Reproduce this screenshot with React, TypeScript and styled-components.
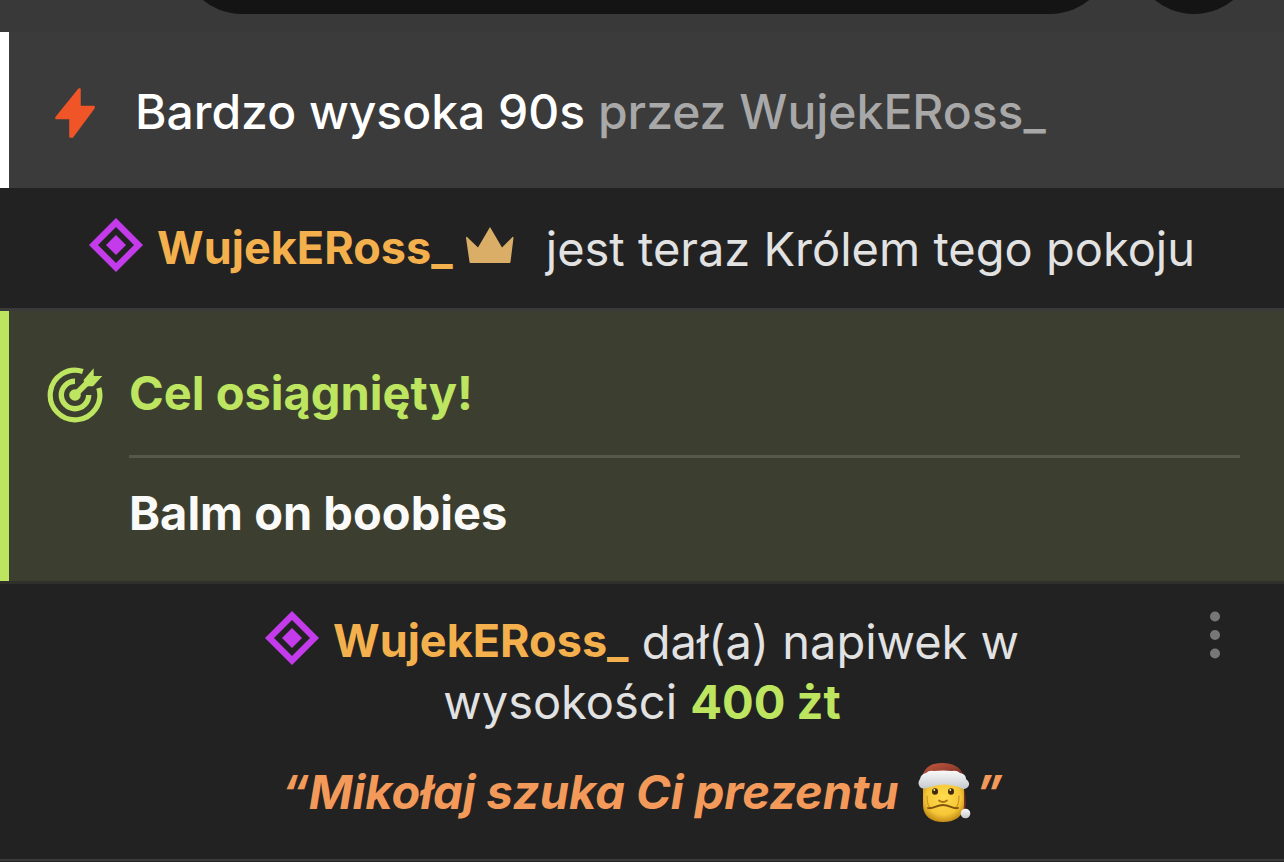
import React from "react";
import styled, { createGlobalStyle } from "styled-components";

const GlobalStyle = createGlobalStyle`
  *, *::before, *::after { box-sizing: border-box; }
  body {
    margin: 0;
    background: #222222;
    color: #e2e2e2;
    font-family: Inter, "Noto Sans", sans-serif;
    font-size: 47px;
    line-height: 60px;
  }
  p, h2 { margin: 0; font-size: inherit; }
`;

const Chat = styled.main`
  display: flex;
  flex-direction: column;
`;

const TopBar = styled.header`
  display: flex;
  align-items: flex-end;
  gap: 20px;
  height: 32px;
  padding: 0 28px 18px 180px;
  background: #393939;
  overflow: hidden;
`;

const Pill = styled.div<{ $round?: boolean }>`
  flex: ${(p) => (p.$round ? "0 0 124px" : "1 1 0")};
  height: 124px;
  border-radius: 62px;
  background: #141414;
`;

const Notice = styled.section<{ $accent: string; $fill: string }>`
  border-left: 9px solid ${(p) => p.$accent};
  background: ${(p) => p.$fill};
`;

const DeviceNotice = styled(Notice)`
  display: flex;
  align-items: center;
  gap: 40px;
  padding: 50px 44px 46px;
  color: #ffffff;
  font-size: 48px;
  font-weight: 500;
`;

const Muted = styled.span`
  color: #a8a8a8;
`;

const Message = styled.article`
  position: relative;
  padding: 30px 40px 29px;
  border-bottom: 3px solid #3a3a3a;
  text-align: center;
`;

const TipMessage = styled(Message)`
  padding: 27px 220px 37px;
  border-top: 3px solid #2f302b;
  border-bottom-width: 2px;
`;

const User = styled.a`
  color: #f3b04d;
  font-size: 45px;
  font-weight: 700;
  line-height: 48px;
  text-decoration: none;
  vertical-align: 2px;

  svg {
    margin-right: 14px;
    vertical-align: -8px;
  }
`;

const CrownSlot = styled.span`
  margin: 0 18px 0 12px;

  svg {
    vertical-align: 2px;
  }
`;

const GoalNotice = styled(Notice)`
  display: grid;
  grid-template-columns: 56px 1fr;
  column-gap: 26px;
  align-items: center;
  padding: 52px 44px 38px 38px;
  font-weight: 700;
`;

const GoalTitle = styled.h2`
  color: #bee560;
  font-weight: 700;
`;

const GoalText = styled.p`
  grid-column: 2;
  margin-top: 32px;
  padding-top: 25px;
  border-top: 3px solid #55584b;
  color: #fafaf8;
`;

const Amount = styled.strong`
  color: #bee560;
  font-weight: 700;
`;

const Quote = styled.p`
  display: flex;
  align-items: center;
  justify-content: center;
  margin-top: 30px;
  color: #f39a5a;
  font-style: italic;
  font-weight: 700;
`;

const MenuButton = styled.button`
  position: absolute;
  top: 24px;
  right: 56px;
  display: flex;
  padding: 0;
  border: 0;
  background: none;
  cursor: pointer;
`;

const Bolt = () => (
  <svg width="42" height="52" viewBox="-1 -2 42 52" aria-hidden="true">
    <path d="M25 1 2 29.500v1h14V49h2.500L40 20v-1.500H26V1z" fill="#f05527" stroke="#f05527" strokeWidth="1.500" strokeLinejoin="round" />
  </svg>
);

const Diamond = () => (
  <svg width="54" height="54" viewBox="0 0 54 54" aria-hidden="true">
    <path d="M27 0 54 27 27 54 0 27zM27 9 9 27l18 18 18-18z" fill="#c33bea" fillRule="evenodd" />
    <path d="m27 17 10 10-10 10-10-10z" fill="#c33bea" />
  </svg>
);

const Crown = () => (
  <svg width="50" height="38" viewBox="0 0 50 38" aria-hidden="true">
    <path d="M25 1 37 21.500 47.500 11q1-.5 1 .8L45.500 36q-.1 1-1 1h-39q-.9 0-1-1L1 11.800q0-1.300 1-.8l11 10.500z" fill="#dbae68" />
  </svg>
);

const Target = () => (
  <svg width="56" height="60" viewBox="0 -4 56 60" aria-hidden="true">
    <g fill="none" stroke="#bee560">
      <path d="M35.800 4.500A24.800 24.800 0 1 0 51.800 21" strokeWidth="5.200" />
      <path d="M28 14.300A13.700 13.700 0 1 0 41.700 28" strokeWidth="5.400" />
      <path d="m28 28 13-13" strokeWidth="6" />
    </g>
    <circle cx="28" cy="28" r="5.800" fill="#bee560" />
    <path d="M36.500 13 46.700 1.300V9h8.600L46 19.300h-7.300z" fill="#bee560" />
  </svg>
);

const Dots = () => (
  <svg width="26" height="54" viewBox="0 0 26 54" fill="#777777" aria-hidden="true">
    <circle cx="13" cy="8.500" r="5" />
    <circle cx="13" cy="27" r="5" />
    <circle cx="13" cy="45.500" r="5" />
  </svg>
);

const Santa = () => (
  <svg width="77" height="60" viewBox="-2 0 77 60" role="img" aria-label="Mikołaj">
    <defs>
      <radialGradient id="face" cx="50%" cy="40%" r="65%">
        <stop offset="0" stopColor="#ffdc4e" />
        <stop offset=".65" stopColor="#f6c636" />
        <stop offset="1" stopColor="#b77d10" />
      </radialGradient>
      <linearGradient id="hat" x1="0" y1="0" x2="1" y2="1">
        <stop offset="0" stopColor="#c95a42" />
        <stop offset="1" stopColor="#6f2b20" />
      </linearGradient>
      <linearGradient id="fur" x1="0" y1="0" x2="0" y2="1">
        <stop offset="0" stopColor="#fafafa" />
        <stop offset="1" stopColor="#c5c9cc" />
      </linearGradient>
    </defs>
    <path d="M59 18q8 12 5 32l-5-2z" fill="#792f20" />
    <path d="M22 19v24c0 11 8 17 20 17s21-6 21-17V19z" fill="url(#face)" />
    <path d="M26 34c0 7 1 11 4 12M58 34c0 7-1 11-4 12" fill="none" stroke="#c99422" strokeWidth="1.200" strokeLinecap="round" />
    <path d="M27 46c5 1.500 8-3 15-3s10 4.500 15 3" fill="none" stroke="#80540e" strokeWidth="1.800" strokeLinecap="round" />
    <path d="M38 38.500q4 3 8 0" fill="none" stroke="#a87112" strokeWidth="1.800" strokeLinecap="round" />
    <ellipse cx="34" cy="29.500" rx="3" ry="3.200" fill="#3d2a0b" />
    <ellipse cx="50" cy="29.500" rx="3" ry="3.200" fill="#3d2a0b" />
    <circle cx="33.300" cy="28" r=".9" fill="#fff1b5" />
    <circle cx="49.300" cy="28" r=".9" fill="#fff1b5" />
    <path d="M21 15C24 4 31 1 41 1s19 3 22 14l-21-4z" fill="url(#hat)" />
    <path d="M19 25q-3-4 0-8 1-5 6-6 3-3 8-2 9-1 18 0 5-1 8 2 6 1 6 6 5 4 2 8-4 4-9 0-15-5-29 0-7 3-10 0z" fill="url(#fur)" />
    <circle cx="64.500" cy="51.500" r="4.800" fill="url(#fur)" />
  </svg>
);

const UserName = () => (
  <User href="#WujekERoss_">
    <Diamond />
    WujekERoss_
  </User>
);

export default function App() {
  return (
    <>
      <GlobalStyle />
      <Chat>
        <TopBar>
          <Pill />
          <Pill $round />
        </TopBar>
        <DeviceNotice $accent="#ffffff" $fill="#3b3b3b">
          <Bolt />
          <p>
            Bardzo wysoka 90s <Muted>przez WujekERoss_</Muted>
          </p>
        </DeviceNotice>
        <Message>
          <UserName />
          <CrownSlot>
            <Crown />
          </CrownSlot>{" "}
          jest teraz Królem tego pokoju
        </Message>
        <GoalNotice $accent="#bee560" $fill="#3c3f30">
          <Target />
          <GoalTitle>Cel osiągnięty!</GoalTitle>
          <GoalText>Balm on boobies</GoalText>
        </GoalNotice>
        <TipMessage>
          <p>
            <UserName /> dał(a) napiwek w wysokości <Amount>400 żt</Amount>
          </p>
          <Quote>
            “Mikołaj szuka Ci prezentu <Santa />”
          </Quote>
          <MenuButton type="button" aria-label="Menu">
            <Dots />
          </MenuButton>
        </TipMessage>
      </Chat>
    </>
  );
}
